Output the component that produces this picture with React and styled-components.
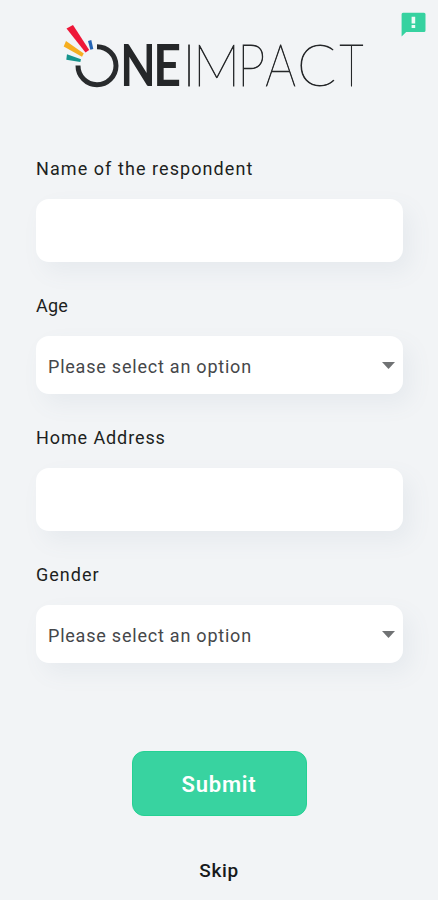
import React from "react";
import styled, { createGlobalStyle } from "styled-components";

const GlobalStyle = createGlobalStyle`
  * { box-sizing: border-box; }
  body { margin: 0; background: #f2f4f6; }
`;

const Screen = styled.main`
  position: relative;
  height: 900px;
  display: flex;
  flex-direction: column;
  align-items: center;
  overflow: hidden;
  background: #f2f4f6;
  font-family: Roboto, "Liberation Sans", sans-serif;
`;

const FeedbackButton = styled.button`
  position: absolute;
  top: 12px;
  right: 12px;
  display: flex;
  padding: 0;
  border: 0;
  background: none;
`;

const FeedbackIcon = styled.svg`
  width: 25px;
  height: 25px;
`;

const Logo = styled.svg`
  display: block;
  flex: none;
  width: 438px;
  height: 100px;
`;

const LogoLetter = styled.text`
  font-family: Lato, sans-serif;
  font-size: 57.5px;
  font-weight: ${(p) => (p.$bold ? 700 : 100)};
  fill: #252729;
  stroke: #252729;
  stroke-width: ${(p) => (p.$bold ? 0 : 0.8)}px;
`;

const Form = styled.form`
  width: 100%;
  padding: 54px 35px 0 36px;
  display: flex;
  flex-direction: column;
  gap: 29px;
`;

const Field = styled.div`
  display: flex;
  flex-direction: column;
  gap: 18px;
`;

const Label = styled.label`
  height: 27px;
  line-height: 29px;
  font-size: 18px;
  letter-spacing: ${(p) => p.$tracking}px;
  color: #1d1f21;
`;

const Control = styled.div`
  height: ${(p) => (p.$select ? 58 : 63)}px;
  padding: 3px 8px 0 12px;
  display: flex;
  align-items: center;
  justify-content: space-between;
  border-radius: 13px;
  background: #fff;
  box-shadow: 8px 10px 22px rgba(100, 125, 155, 0.08);
  font-size: 18px;
  letter-spacing: 0.78px;
  color: #45474a;
`;

const Caret = styled.svg`
  width: 13px;
  height: 7px;
  margin-top: -2px;
  fill: #707274;
`;

const SubmitButton = styled.button`
  width: 175px;
  height: 65px;
  margin-top: 88px;
  padding: 1px 0 0;
  border: 1px solid #25d193;
  border-radius: 12px;
  background: #38d3a0;
  color: #fff;
  font: 600 22px Roboto, sans-serif;
  letter-spacing: 0.8px;
`;

const SkipButton = styled.button`
  margin-top: 43px;
  padding: 0;
  border: 0;
  background: none;
  color: #17191b;
  font: 500 19px/24px Roboto, sans-serif;
  letter-spacing: 0.6px;
`;

const fields = [
  { label: "Name of the respondent", tracking: 1.07 },
  { label: "Age", select: true, tracking: 0.2 },
  { label: "Home Address", tracking: 0.9 },
  { label: "Gender", select: true, tracking: 1 },
];

const letters = [
  { char: "N", x: 120.2, scale: 0.8, bold: true },
  { char: "E", x: 153.3, scale: 0.84, bold: true },
  { char: "I", x: 182, scale: 1 },
  { char: "M", x: 193, scale: 0.92 },
  { char: "P", x: 237.3, scale: 0.87 },
  { char: "A", x: 265.2, scale: 0.84 },
  { char: "C", x: 297, scale: 1 },
  { char: "T", x: 339.5, scale: 0.73 },
];

function BrandLogo() {
  return (
    <Logo viewBox="0 0 438 100" role="img" aria-label="OneImpact">
      <path d="M66.5 28.5 73 25 89.2 50 85.5 52.5Z" fill="#ee1738" />
      <path d="M66 41 63.7 46.5 82 56.8 83.8 53.5Z" fill="#f6ae20" />
      <path d="M67 54.3 66.3 59.7 80.3 62 81 59.3Z" fill="#17948d" />
      <path d="M88 41 91.3 40 93.3 49 90.3 49.8Z" fill="#2464b4" />
      <path d="M97 46.7A19 19 0 1 1 78 65.5" fill="none" stroke="#292b2d" strokeWidth="5" />
      {letters.map((l) => (
        <LogoLetter key={l.char} $bold={l.bold} transform={`translate(${l.x} 86) scale(${l.scale} 1)`}>
          {l.char}
        </LogoLetter>
      ))}
    </Logo>
  );
}

export default function App() {
  return (
    <Screen>
      <GlobalStyle />
      <FeedbackButton aria-label="Feedback">
        <FeedbackIcon viewBox="0 0 25 25">
          <path d="M2 .7H23Q24.5.7 24.5 2.2V18.5Q24.5 20 23 20H5.2L.6 24.5V2.2Q.6.7 2 .7Z" fill="#36d2a0" />
          <path d="M10.6 4.8H14.2V11.4H10.6ZM10.6 12.9H14.2V15.9H10.6Z" fill="#effcf7" />
        </FeedbackIcon>
      </FeedbackButton>
      <BrandLogo />
      <Form id="respondent">
        {fields.map((f) => (
          <Field key={f.label}>
            <Label $tracking={f.tracking}>{f.label}</Label>
            <Control $select={f.select}>
              {f.select && (
                <>
                  <span>Please select an option</span>
                  <Caret viewBox="0 0 13 7"><path d="M0 0H13L6.5 7Z" /></Caret>
                </>
              )}
            </Control>
          </Field>
        ))}
      </Form>
      <SubmitButton type="button">Submit</SubmitButton>
      <SkipButton type="button">Skip</SkipButton>
    </Screen>
  );
}
